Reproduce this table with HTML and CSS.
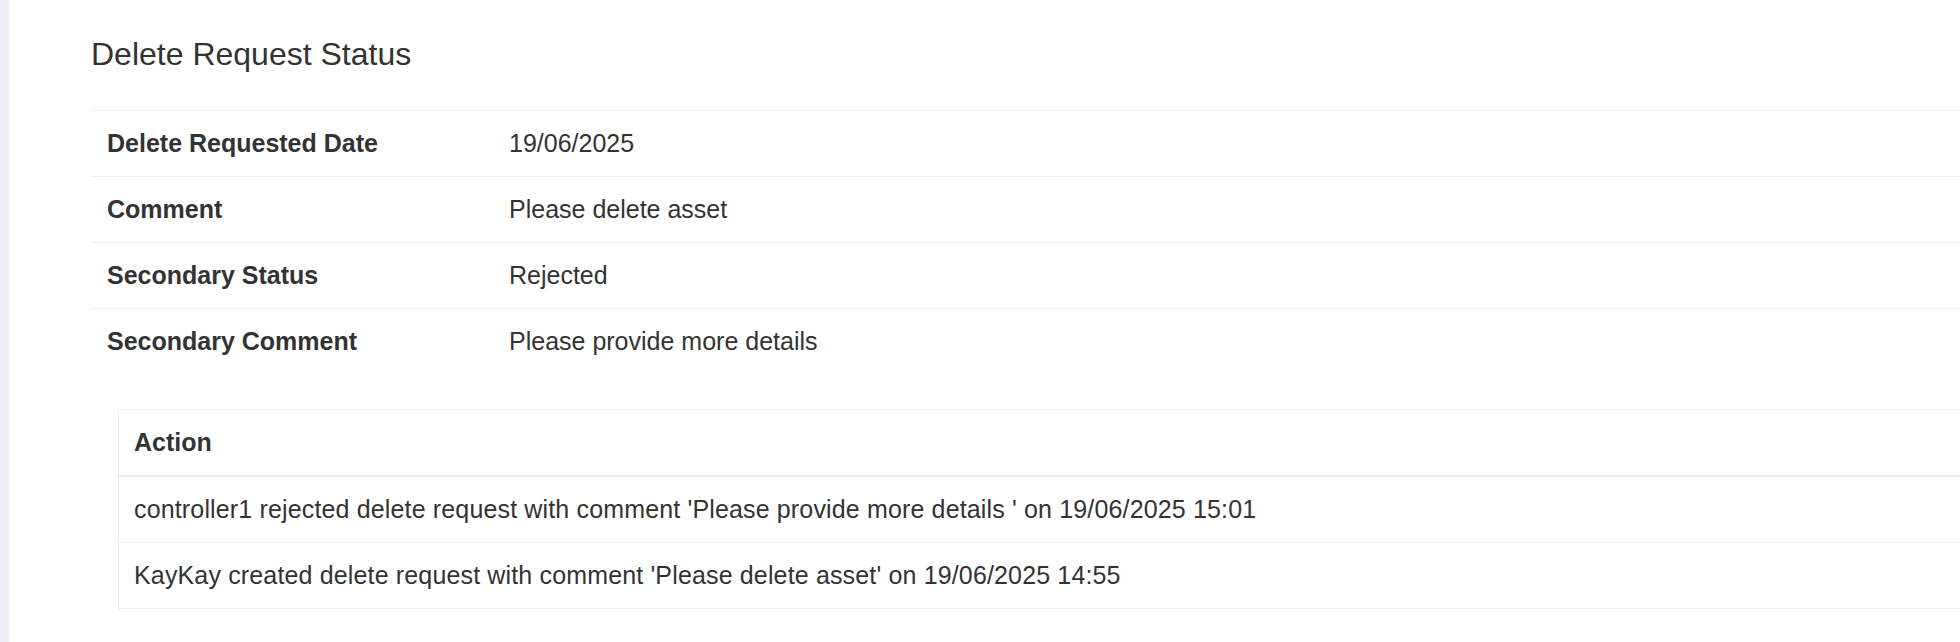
FILE: index.html
```html
<!DOCTYPE html>
<html lang="en">
<head>
<meta charset="utf-8">
<title>Delete Request Status</title>
<link rel="stylesheet" href="styles.css">
</head>
<body>
<div class="page">
  <aside class="sidebar"></aside>
  <main class="content">
    <h4 class="title">Delete Request Status</h4>
    <table class="details">
      <tbody>
        <tr><th>Delete Requested Date</th><td>19/06/2025</td></tr>
        <tr><th>Comment</th><td>Please delete asset</td></tr>
        <tr><th>Secondary Status</th><td>Rejected</td></tr>
        <tr><th>Secondary Comment</th><td>Please provide more details</td></tr>
      </tbody>
    </table>
    <div class="history">
      <table class="actions">
        <thead>
          <tr><th>Action</th></tr>
        </thead>
        <tbody>
          <tr><td>controller1 rejected delete request with comment 'Please provide more details ' on 19/06/2025 15:01</td></tr>
          <tr><td>KayKay created delete request with comment 'Please delete asset' on 19/06/2025 14:55</td></tr>
        </tbody>
      </table>
    </div>
  </main>
</div>
</body>
</html>
```

FILE: styles.css
```css
html, body {
  margin: 0;
  padding: 0;
  background: #ffffff;
}

body {
  font-family: "Liberation Sans", Arial, Helvetica, sans-serif;
  color: #333333;
}

.page {
  display: flex;
  min-height: 642px;
}

.sidebar {
  width: 9px;
  flex: 0 0 9px;
  background: #eeeef7;
}

.content {
  flex: 1;
  padding: 37px 0 0 82px;
  min-width: 0;
}

.title {
  margin: 0 0 38px 0;
  font-size: 32px;
  font-weight: 400;
  line-height: 35px;
  color: #333333;
}

.details {
  width: 100%;
  border-collapse: collapse;
  font-size: 25px;
  line-height: 35px;
}

.details tr {
  border-top: 1px solid #efefef;
}

.details th,
.details td {
  padding: 15px 16px 15px 16px;
  text-align: left;
  vertical-align: top;
}

.details th {
  width: 370px;
  font-weight: 700;
}

.history {
  margin: 35px 0 0 27px;
}

.actions {
  width: 100%;
  border-collapse: collapse;
  border: 1px solid #efefef;
  border-right: none;
  font-size: 25px;
  line-height: 35px;
}

.actions th,
.actions td {
  padding: 15px;
  text-align: left;
}

.actions thead th {
  font-weight: 700;
  border-bottom: 2px solid #ececec;
}

.actions tbody tr {
  border-top: 1px solid #efefef;
}

.actions tbody td {
  letter-spacing: 0.15px;
}
```
